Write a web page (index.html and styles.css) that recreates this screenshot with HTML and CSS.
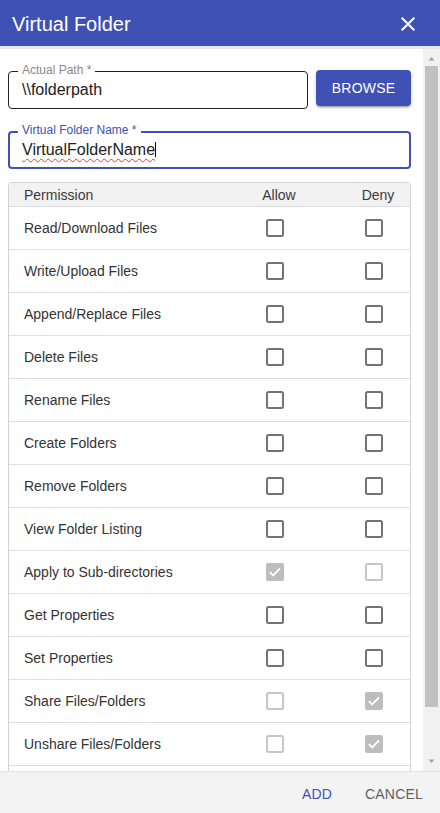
FILE: index.html
```html
<!DOCTYPE html>
<html lang="en">
<head>
<meta charset="utf-8">
<title>Virtual Folder</title>
<link rel="stylesheet" href="styles.css">
</head>
<body>
<svg class="defs" width="0" height="0" aria-hidden="true">
  <defs>
    <symbol id="cb-off" viewBox="0 0 24 24"><rect x="4" y="4" width="16" height="16" rx="1.5" fill="none" stroke="currentColor" stroke-width="2"/></symbol>
    <symbol id="cb-on" viewBox="0 0 24 24"><rect x="3" y="3" width="18" height="18" rx="2" fill="currentColor"/><path d="M6.8 12.2l3.3 3.2 7-7" fill="none" stroke="#fff" stroke-width="1.8"/></symbol>
  </defs>
</svg>
<div class="dialog">
  <header class="title-bar">
    <h1 class="title">Virtual Folder</h1>
    <svg class="close" viewBox="0 0 24 24" aria-label="Close"><path d="M19 6.41L17.59 5 12 10.59 6.41 5 5 6.41 10.59 12 5 17.59 6.41 19 12 13.41 17.59 19 19 17.59 13.41 12z"/></svg>
  </header>
  <div class="body-area">
    <main class="content">
      <div class="path-row">
        <fieldset class="field">
          <legend>Actual Path *</legend>
          <div class="value">\\folderpath</div>
        </fieldset>
        <button class="browse" type="button">BROWSE</button>
      </div>
      <fieldset class="field focused">
        <legend>Virtual Folder Name *</legend>
        <div class="value"><span class="misspelled">VirtualFolderName</span><span class="caret"></span></div>
      </fieldset>
      <div class="perm-table">
        <div class="perm-row head"><span class="name">Permission</span><span class="col-h">Allow</span><span class="col-h">Deny</span></div>
        <div class="perm-row"><span class="name">Read/Download Files</span><svg class="cb"><use href="#cb-off"/></svg><svg class="cb"><use href="#cb-off"/></svg></div>
        <div class="perm-row"><span class="name">Write/Upload Files</span><svg class="cb"><use href="#cb-off"/></svg><svg class="cb"><use href="#cb-off"/></svg></div>
        <div class="perm-row"><span class="name">Append/Replace Files</span><svg class="cb"><use href="#cb-off"/></svg><svg class="cb"><use href="#cb-off"/></svg></div>
        <div class="perm-row"><span class="name">Delete Files</span><svg class="cb"><use href="#cb-off"/></svg><svg class="cb"><use href="#cb-off"/></svg></div>
        <div class="perm-row"><span class="name">Rename Files</span><svg class="cb"><use href="#cb-off"/></svg><svg class="cb"><use href="#cb-off"/></svg></div>
        <div class="perm-row"><span class="name">Create Folders</span><svg class="cb"><use href="#cb-off"/></svg><svg class="cb"><use href="#cb-off"/></svg></div>
        <div class="perm-row"><span class="name">Remove Folders</span><svg class="cb"><use href="#cb-off"/></svg><svg class="cb"><use href="#cb-off"/></svg></div>
        <div class="perm-row"><span class="name">View Folder Listing</span><svg class="cb"><use href="#cb-off"/></svg><svg class="cb"><use href="#cb-off"/></svg></div>
        <div class="perm-row"><span class="name">Apply to Sub-directories</span><svg class="cb on"><use href="#cb-on"/></svg><svg class="cb dis"><use href="#cb-off"/></svg></div>
        <div class="perm-row"><span class="name">Get Properties</span><svg class="cb"><use href="#cb-off"/></svg><svg class="cb"><use href="#cb-off"/></svg></div>
        <div class="perm-row"><span class="name">Set Properties</span><svg class="cb"><use href="#cb-off"/></svg><svg class="cb"><use href="#cb-off"/></svg></div>
        <div class="perm-row"><span class="name">Share Files/Folders</span><svg class="cb dis"><use href="#cb-off"/></svg><svg class="cb on"><use href="#cb-on"/></svg></div>
        <div class="perm-row"><span class="name">Unshare Files/Folders</span><svg class="cb dis"><use href="#cb-off"/></svg><svg class="cb on"><use href="#cb-on"/></svg></div>
        <div class="perm-row"><span class="name"></span><svg class="cb"><use href="#cb-off"/></svg><svg class="cb"><use href="#cb-off"/></svg></div>
      </div>
    </main>
    <div class="scrollbar" aria-hidden="true">
      <div class="sb-btn"><svg width="17" height="17" viewBox="0 0 17 17"><path d="M5.5 11.5h6l-3-3.5z"/></svg></div>
      <div class="sb-track"><div class="sb-thumb"></div></div>
      <div class="sb-btn"><svg width="17" height="17" viewBox="0 0 17 17"><path d="M5.5 5.5h6l-3 3.5z"/></svg></div>
    </div>
  </div>
  <footer class="actions">
    <button class="btn-text primary" type="button">ADD</button>
    <button class="btn-text" type="button">CANCEL</button>
  </footer>
</div>
</body>
</html>
```

FILE: styles.css
```css
* { box-sizing: border-box; }

html, body {
  margin: 0;
  height: 100%;
}

body {
  font-family: "Liberation Sans", Arial, sans-serif;
  background: #fff;
  color: #212121;
}

.defs {
  display: block;
  width: 0;
  height: 0;
}

.dialog {
  height: 813px;
  display: flex;
  flex-direction: column;
}

.title-bar {
  flex: none;
  height: 49px;
  background: #3f51b5;
  border-bottom: 3px solid #e7e7e7;
  display: flex;
  align-items: center;
  justify-content: space-between;
  padding: 2px 20px 0 12px;
}

.title {
  margin: 0;
  font-size: 20px;
  font-weight: 400;
  line-height: 23px;
  color: #fff;
}

.close {
  display: block;
  width: 24px;
  height: 24px;
  fill: #fff;
}

.body-area {
  flex: 1;
  min-height: 0;
  display: flex;
}

.content {
  flex: 1;
  min-width: 0;
  overflow: hidden;
  padding: 14px 12px 16px 8px;
}

.scrollbar {
  flex: none;
  width: 17px;
  background: #f1f1f1;
  display: flex;
  flex-direction: column;
}

.sb-btn {
  flex: none;
  height: 17px;
}

.sb-btn svg {
  display: block;
  fill: #a3a3a3;
}

.sb-track {
  flex: 1;
  padding: 0 2px;
}

.sb-thumb {
  height: 641px;
  background: #c1c1c1;
}

.path-row {
  display: flex;
  align-items: flex-start;
  gap: 8px;
}

.field {
  margin: 0;
  padding: 0;
  min-width: 0;
  flex: 1;
  border: 1px solid #212121;
  border-radius: 4px;
}

.field legend {
  margin-left: 9px;
  padding: 0 4px 3px;
  font-size: 12px;
  line-height: 14px;
  color: #8a8a8a;
}

.value {
  padding: 0 13px 9px;
  font-size: 16px;
  line-height: 19px;
  color: #212121;
  white-space: nowrap;
}

.field.focused {
  margin-top: 14px;
  border: 2px solid #3f51b5;
}

.field.focused legend {
  margin-left: 8px;
  color: #3f51b5;
}

.field.focused .value {
  padding: 0 12px 8px;
}

.misspelled {
  text-decoration: underline wavy #e53935;
  text-decoration-thickness: 1px;
  text-underline-offset: 3px;
}

.caret {
  display: inline-block;
  width: 1px;
  height: 15px;
  background: #000;
  vertical-align: -2px;
}

.browse {
  flex: none;
  width: 95px;
  height: 36px;
  margin-top: 7px;
  padding: 0;
  border: 0;
  border-radius: 4px;
  background: #3f51b5;
  color: #fff;
  font: 14px "Liberation Sans", Arial, sans-serif;
  letter-spacing: 0.2px;
  box-shadow: 0 3px 1px -2px rgba(0,0,0,0.2), 0 2px 2px 0 rgba(0,0,0,0.14), 0 1px 5px 0 rgba(0,0,0,0.12);
}

.perm-table {
  margin-top: 13px;
  border: 1px solid #d2d2d2;
  border-radius: 4px;
}

.perm-row {
  display: grid;
  grid-template-columns: 203px 126px 72px;
  align-items: center;
  height: 43px;
  border-bottom: 1px solid #e0e0e0;
  font-size: 14px;
  color: #333;
}

.perm-row:last-child {
  border-bottom: 0;
  height: 42px;
}

.perm-row.head {
  height: 24px;
  background: #f2f2f2;
  border-radius: 3px 3px 0 0;
  color: #3a3a3a;
}

.name {
  padding-left: 15px;
}

.col-h {
  justify-self: center;
  padding-left: 8px;
}

.cb {
  display: block;
  justify-self: center;
  width: 24px;
  height: 24px;
  color: #737373;
}

.cb.dis {
  color: #c6c6c6;
}

.cb.on {
  color: #bdbdbd;
}

.actions {
  flex: none;
  height: 42px;
  background: #f3f3f3;
  border-top: 1px solid #e3e3e3;
  display: flex;
  justify-content: flex-end;
  align-items: center;
  gap: 8px;
  padding: 3px 9px 0 0;
}

.btn-text {
  min-width: 64px;
  padding: 6px 8px;
  border: 0;
  border-radius: 4px;
  background: none;
  font: 14px/16px "Liberation Sans", Arial, sans-serif;
  letter-spacing: 0.2px;
  color: #616161;
}

.btn-text.primary {
  color: #3f51b5;
}
```
